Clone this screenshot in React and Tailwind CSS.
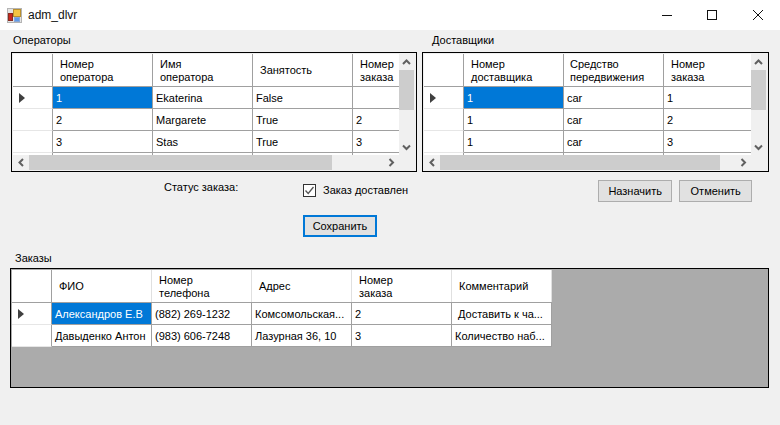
const Chevron = ({ dir }) => {
  const paths = {
    up: "M1 6 L4.5 2.5 L8 6",
    down: "M1 2.5 L4.5 6 L8 2.5",
    left: "M6 1 L2.5 4.5 L6 8",
    right: "M2.5 1 L6 4.5 L2.5 8",
  }
  return (
    <svg width="9" height="9" viewBox="0 0 9 9" fill="none" stroke="#606060" strokeWidth="2">
      <path d={paths[dir]} />
    </svg>
  )
}

const Arrow = () => (
  <svg width="6" height="10" viewBox="0 0 6 10" fill="#404040">
    <path d="M0 0 L6 5 L0 10 Z" />
  </svg>
)

function HeaderCell({ width, children, pad = "pl-[7px]", line = "border-[#a0a0a0]" }) {
  return (
    <div className={`shrink-0 h-full flex items-center pt-px border-r whitespace-pre-line leading-[13px] ${line} ${pad}`} style={{ width }}>
      {children}
    </div>
  )
}

function DataRow({ columns, cells, current, selected }) {
  return (
    <div className="flex h-[22px] shrink-0">
      <div className="shrink-0 w-[40px] flex items-center pl-[6px] border-r border-b border-r-[#a0a0a0] border-b-[#e6e6e6] bg-white">
        {current && <Arrow />}
      </div>
      {cells.map((c, i) => (
        <div
          key={i}
          className={`shrink-0 flex items-center pl-[3px] pt-px border-r border-b border-[#a0a0a0] whitespace-nowrap overflow-hidden ${
            selected && i === 0 ? "bg-[#0078d7] text-white" : "bg-white"
          }`}
          style={{ width: columns[i] }}
        >
          {c}
        </div>
      ))}
    </div>
  )
}

function DataGrid({ columns, headers, rows, vThumb, hThumbWidth }) {
  return (
    <div className="h-[120px] border border-black flex flex-col bg-[#f0f0f0] p-px">
      <div className="flex h-[101px] min-h-0">
        <div className="flex-1 min-w-0 overflow-hidden bg-white flex flex-col">
          <div className="flex h-[33px] shrink-0 border-b border-[#a0a0a0]">
            <div className="shrink-0 w-[40px] h-full border-r border-[#a0a0a0]" />
            {headers.map((h, i) => (
              <HeaderCell key={i} width={columns[i]} pad={h.pad}>
                {h.label}
              </HeaderCell>
            ))}
          </div>
          {rows.map((r, i) => (
            <DataRow key={i} columns={columns} cells={r} current={i === 0} selected={i === 0} />
          ))}
          <div className="flex h-[2px] shrink-0">
            <div className="shrink-0 w-[40px] border-r border-[#a0a0a0]" />
            {columns.map((w, i) => (
              <div key={i} className="shrink-0 border-r border-[#a0a0a0]" style={{ width: w }} />
            ))}
          </div>
        </div>
        <div className="shrink-0 w-[16px] flex flex-col pr-px">
          <div className="h-[16px] flex items-center justify-center">
            <Chevron dir="up" />
          </div>
          <div className="flex-1 w-full">
            <div className="w-full bg-[#cdcdcd]" style={{ height: vThumb }} />
          </div>
          <div className="h-[16px] flex items-center justify-center">
            <Chevron dir="down" />
          </div>
        </div>
      </div>
      <div className="flex-1 flex items-center">
        <div className="w-[16px] shrink-0 flex justify-center">
          <Chevron dir="left" />
        </div>
        <div className="flex-1 h-full">
          <div className="h-full bg-[#cdcdcd]" style={{ width: hThumbWidth }} />
        </div>
        <div className="w-[16px] shrink-0 flex justify-center">
          <Chevron dir="right" />
        </div>
        <div className="w-[16px] shrink-0" />
      </div>
    </div>
  )
}

function WinButton({ children, className = "" }) {
  return (
    <button className={`h-[22px] border border-[#adadad] bg-[#e1e1e1] text-center ${className}`}>
      {children}
    </button>
  )
}

export default function App() {
  const operators = [
    ["1", "Ekaterina", "False", ""],
    ["2", "Margarete", "True", "2"],
    ["3", "Stas", "True", "3"],
  ]
  const couriers = [
    ["1", "car", "1"],
    ["1", "car", "2"],
    ["1", "car", "3"],
  ]
  const orderCols = [100, 100, 100, 100, 100]
  const orders = [
    ["Александров Е.В", "(882) 269-1232", "Комсомольская...", "2", <span className="pl-[3px]">Доставить к ча...</span>],
    ["Давыденко Антон", "(983) 606-7248", "Лазурная 36, 10", "3", "Количество наб..."],
  ]

  return (
    <div className="w-[780px] h-[425px] overflow-hidden flex flex-col bg-[#f0f0f0] text-[11px] text-black font-['Liberation_Sans',sans-serif]">
      <div className="h-[30px] shrink-0 bg-white flex items-center pl-[7px]">
        <svg width="15" height="15" viewBox="0 0 15 15">
          <rect x="0" y="0" width="15" height="15" fill="#e4e4e4" />
          <rect x="0.5" y="0.5" width="14" height="14" fill="none" stroke="#b4b4b4" />
          <rect x="6.5" y="1.5" width="7" height="7" fill="#f4c542" stroke="#b89030" />
          <rect x="1.5" y="5.5" width="4" height="7" fill="#c8281e" stroke="#8a2a20" />
          <rect x="7.5" y="9.5" width="5" height="4" fill="#5f9be8" stroke="#8aa8d8" />
        </svg>
        <span className="ml-[6px] text-[12px] text-[#111]">adm_dlvr</span>
        <div className="ml-auto flex items-center">
          <svg className="mr-[35px]" width="10" height="10" viewBox="0 0 10 10" stroke="#111" fill="none">
            <path d="M0 5.5 H10" />
          </svg>
          <svg className="mr-[36px]" width="10" height="10" viewBox="0 0 10 10" stroke="#111" fill="none">
            <rect x="0.5" y="0.5" width="9" height="9" />
          </svg>
          <svg className="mr-[17px]" width="10" height="10" viewBox="0 0 10 10" stroke="#111" fill="none">
            <path d="M0 0 L10 10 M10 0 L0 10" />
          </svg>
        </div>
      </div>

      <div className="flex pl-[11px] gap-[5px]">
        <div className="w-[406px]">
          <div className="h-[22px] pb-[2px] pl-[2px] flex items-center">Операторы</div>
          <DataGrid
            columns={[100, 100, 100, 100]}
            headers={[
              { label: "Номер\nоператора" },
              { label: "Имя\nоператора" },
              { label: "Занятость" },
              { label: "Номер\nзаказа" },
            ]}
            rows={operators}
            vThumb={40}
            hThumbWidth={303}
          />
        </div>
        <div className="w-[347px]">
          <div className="h-[22px] pb-[2px] pl-[10px] flex items-center">Доставщики</div>
          <DataGrid
            columns={[100, 100, 100]}
            headers={[
              { label: "Номер\nдоставщика" },
              { label: "Средство\nпередвижения", pad: "pl-[6px]" },
              { label: "Номер\nзаказа" },
            ]}
            rows={couriers}
            vThumb={40}
            hThumbWidth={280}
          />
        </div>
      </div>

      <div className="flex items-start h-[35px] pt-[8px]">
        <div className="ml-[164px] w-[139px] mt-[-1px]">Статус заказа:</div>
        <div className="flex items-center h-[22px] mt-[-1px]">
          <span className="w-[13px] h-[13px] border border-[#333] bg-white flex items-center justify-center">
            <svg width="11" height="11" viewBox="0 0 11 11" fill="none" stroke="#555" strokeWidth="1.3">
              <path d="M1.5 5.5 L4.2 8.5 L9.5 2" />
            </svg>
          </span>
          <span className="ml-[7px]">Заказ доставлен</span>
        </div>
        <WinButton className="w-[74px] ml-[190px]">Назначить</WinButton>
        <WinButton className="w-[73px] ml-[7px]">Отменить</WinButton>
      </div>

      <div className="pl-[303px] pt-[8px]">
        <button className="w-[74px] h-[22px] border-2 border-[#0078d7] bg-[#e1e1e1] text-center">Сохранить</button>
      </div>

      <div className="h-[20px] pl-[15px] mt-[11px] flex items-center">Заказы</div>
      <div className="ml-[10px] w-[759px] h-[120px] border border-black bg-[#ababab] p-px">
        <div className="w-[540px] bg-white">
          <div className="flex h-[33px] border-b border-[#a0a0a0]">
            <div className="shrink-0 w-[40px] h-full border-r border-[#a0a0a0]" />
            <HeaderCell width={100} line="border-[#e0e0e0]">ФИО</HeaderCell>
            <HeaderCell width={100} line="border-[#e0e0e0]">{"Номер\nтелефона"}</HeaderCell>
            <HeaderCell width={100} line="border-[#e0e0e0]">Адрес</HeaderCell>
            <HeaderCell width={100} line="border-[#e0e0e0]">{"Номер\nзаказа"}</HeaderCell>
            <HeaderCell width={100} line="border-[#e0e0e0]">Комментарий</HeaderCell>
          </div>
          {orders.map((r, i) => (
            <DataRow key={i} columns={orderCols} cells={r} current={i === 0} selected={i === 0} />
          ))}
        </div>
      </div>
    </div>
  )
}
